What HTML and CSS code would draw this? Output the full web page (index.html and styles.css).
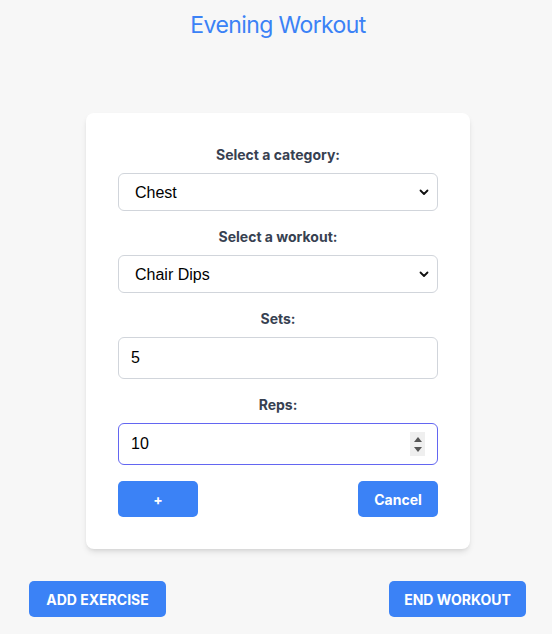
FILE: index.html
```html
<!DOCTYPE html>
<html lang="en">
<head>
  <meta charset="UTF-8">
  <meta name="viewport" content="width=device-width, initial-scale=1.0">
  <title>Evening Workout</title>
  <link rel="stylesheet" href="styles.css">
</head>
<body>
  <div class="page">
    <h1 class="title">Evening Workout</h1>

    <div class="card">
      <div class="field">
        <label for="category">Select a category:</label>
        <div class="select-wrap">
          <select id="category">
            <option>Chest</option>
            <option>Back</option>
            <option>Legs</option>
          </select>
          <svg class="chevron" width="10" height="7" viewBox="0 0 10 7"><path d="M1.5 1.5 L5 5 L8.5 1.5" fill="none" stroke="#111" stroke-width="1.8" stroke-linecap="round" stroke-linejoin="round"/></svg>
        </div>
      </div>

      <div class="field">
        <label for="workout">Select a workout:</label>
        <div class="select-wrap">
          <select id="workout">
            <option>Chair Dips</option>
            <option>Push Ups</option>
          </select>
          <svg class="chevron" width="10" height="7" viewBox="0 0 10 7"><path d="M1.5 1.5 L5 5 L8.5 1.5" fill="none" stroke="#111" stroke-width="1.8" stroke-linecap="round" stroke-linejoin="round"/></svg>
        </div>
      </div>

      <div class="field">
        <label for="sets">Sets:</label>
        <input id="sets" type="number" value="5">
      </div>

      <div class="field">
        <label for="reps">Reps:</label>
        <div class="number-wrap">
          <input id="reps" class="focused" type="number" value="10">
          <div class="spinner">
            <span class="up"></span>
            <span class="down"></span>
          </div>
        </div>
      </div>

      <div class="card-actions">
        <button class="btn small">+</button>
        <button class="btn small">Cancel</button>
      </div>
    </div>

    <div class="actions">
      <button class="btn wide">Add Exercise</button>
      <button class="btn wide">End Workout</button>
    </div>
  </div>
</body>
</html>
```

FILE: styles.css
```css
body {
  margin: 0;
  background: #f7f7f7;
  font-family: Inter, "Noto Sans", sans-serif;
  color: #374151;
}
.page {
  padding: 9px 0 0 4px;
}
.title {
  margin: 0;
  text-align: center;
  font-size: 23px;
  line-height: 32px;
  font-weight: 400;
  letter-spacing: -0.6px;
  color: #3b82f6;
}
.card {
  box-sizing: border-box;
  width: 384px;
  margin: 72px auto 0;
  padding: 32px;
  background: #fff;
  border-radius: 8px;
  box-shadow: 0 4px 6px -1px rgba(0, 0, 0, 0.1), 0 2px 4px -2px rgba(0, 0, 0, 0.1);
}
.field {
  margin-bottom: 16px;
}
.field label {
  display: block;
  text-align: center;
  font-size: 14px;
  line-height: 20px;
  font-weight: 700;
  color: #374151;
  margin-bottom: 8px;
}
.select-wrap,
.number-wrap {
  position: relative;
}
select,
input {
  box-sizing: border-box;
  display: block;
  width: 100%;
  margin: 0;
  background: #fff;
  border: 1px solid #d1d5db;
  border-radius: 6px;
  font-family: "Liberation Sans", Arial, sans-serif;
  font-size: 16px;
  color: #000;
  outline: none;
}
select {
  height: 38px;
  padding: 0 16px;
  -webkit-appearance: none;
  appearance: none;
}
.chevron {
  position: absolute;
  right: 9px;
  top: 16px;
  pointer-events: none;
}
input {
  height: 42px;
  padding: 0 12px;
  -moz-appearance: textfield;
}
input::-webkit-inner-spin-button,
input::-webkit-outer-spin-button {
  -webkit-appearance: none;
  margin: 0;
}
input.focused {
  border-color: #6366f1;
}
.spinner {
  position: absolute;
  right: 13px;
  top: 9px;
  width: 15px;
  height: 24px;
  background: #efefef;
  display: flex;
  flex-direction: column;
  align-items: center;
  justify-content: center;
  gap: 5px;
}
.spinner .up {
  width: 0;
  height: 0;
  border-left: 4px solid transparent;
  border-right: 4px solid transparent;
  border-bottom: 5px solid #555;
}
.spinner .down {
  width: 0;
  height: 0;
  border-left: 4px solid transparent;
  border-right: 4px solid transparent;
  border-top: 5px solid #555;
}
.card-actions {
  display: flex;
  justify-content: space-between;
}
.btn {
  height: 36px;
  border: none;
  border-radius: 5px;
  background: #3b82f6;
  color: #fff;
  font-family: Inter, "Noto Sans", sans-serif;
  font-size: 14px;
  font-weight: 700;
  cursor: pointer;
}
.btn.small {
  width: 80px;
}
.btn.wide {
  width: 137px;
  text-transform: uppercase;
}
.actions {
  display: flex;
  justify-content: space-between;
  padding: 32px 26px 0 25px;
}
```
